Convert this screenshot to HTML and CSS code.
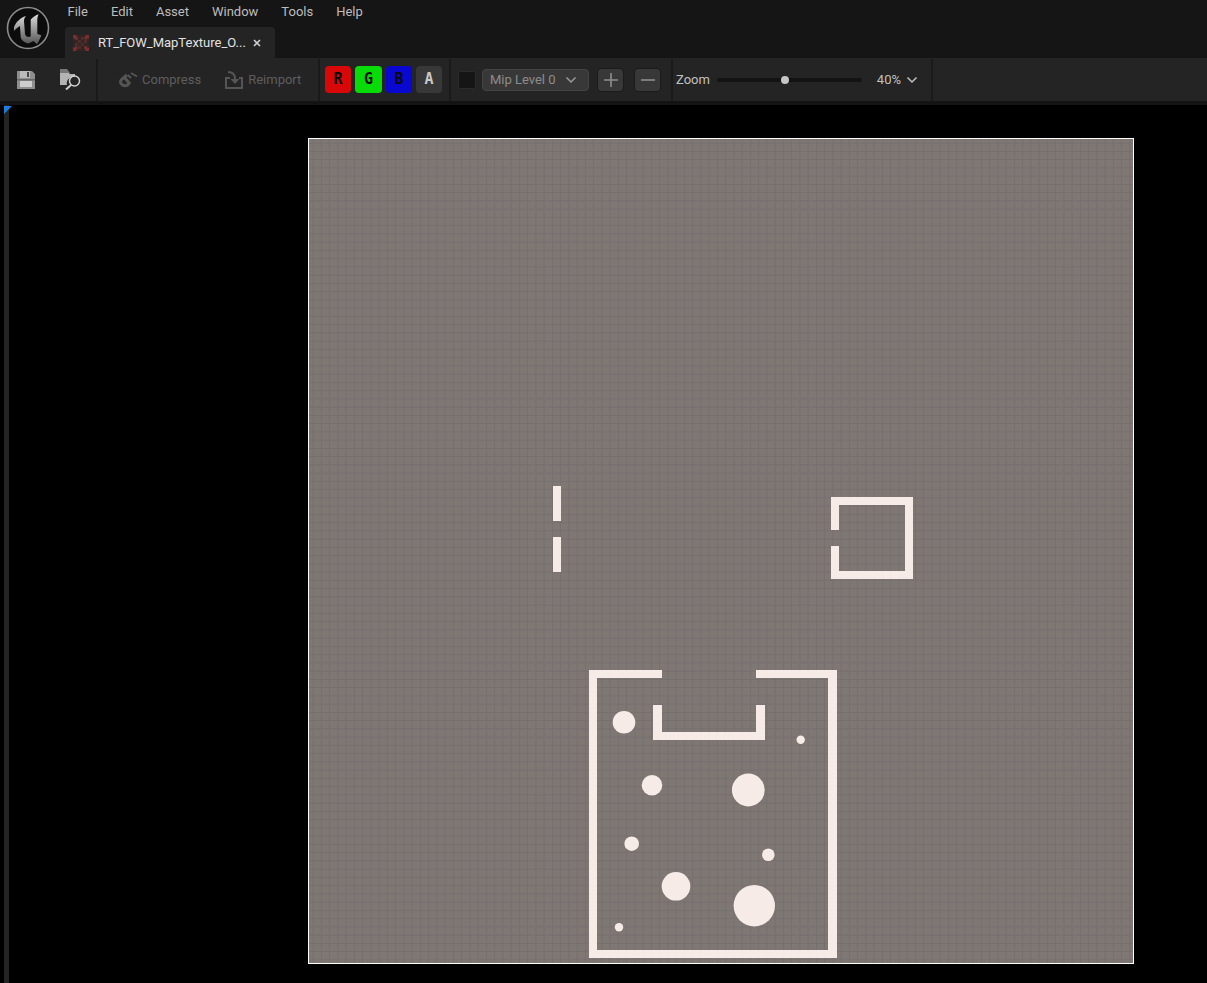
FILE: index.html
```html
<!DOCTYPE html>
<html lang="en">
<head>
  <meta charset="UTF-8" />
  <title>RT_FOW_MapTexture</title>
  <link rel="stylesheet" href="styles.css">
</head>
<body>
  <div class="title-area">
    <svg class="ue-logo" width="44" height="44" viewBox="0 0 44 44">
      <defs>
        <linearGradient id="ueGrad" x1="0" y1="0" x2="0" y2="1">
          <stop offset="0" stop-color="#dcdcdc" />
          <stop offset="0.6" stop-color="#8a8a8a" />
          <stop offset="1" stop-color="#555" />
        </linearGradient>
      </defs>
      <circle cx="22" cy="22" r="20.500" fill="#0c0c0c" stroke="#8c8c8c" stroke-width="1.600" />
      <path d="M8 21 C10 16 14 12 20 10 C18.500 12 18 13 18 15 L19 28 C19.500 30.500 22 31.500 24.700 30.500 L24.700 13.500 C27 11 30 9 32.700 8.300 C31.800 10 31.300 12 31.300 14 L31.300 28 L35.300 29.300 C34 33 32.500 36 31 38.300 L27.500 35 L22.500 37.500 C18 36.500 15 34 14.700 31 L14 20 C12 21 9.500 23 8 25 Z" fill="url(#ueGrad)" />
    </svg>
    <div class="title-right">
      <nav class="menu">
        <span>File</span><span>Edit</span><span>Asset</span><span>Window</span><span>Tools</span><span>Help</span>
      </nav>
      <div class="tab">
        <svg class="tab-icon" width="16" height="16" viewBox="0 0 16 16">
          <rect x="0" y="0" width="16" height="16" fill="#342424" />
          <path d="M2 2h3v3h-3zM8 2h3v3h-3zM5 5h3v3h-3zM11 5h3v3h-3zM2 8h3v3h-3zM8 8h3v3h-3zM5 11h3v3h-3zM11 11h3v3h-3z" fill="#4e2c2c" />
          <path d="M0 0h4l-1 1 2 2-2 2-2-2-1 1zM16 0v4l-1-1-2 2-2-2 2-2-1-1zM0 16v-4l1 1 2-2 2 2-2 2 1 1zM16 16h-4l1-1-2-2 2-2 2 2 1-1z" fill="#7a3030" />
        </svg>
        <span class="tab-title">RT_FOW_MapTexture_O...</span>
        <svg class="tab-close" width="8" height="8" viewBox="0 0 8 8">
          <path d="M1 1l6 6M7 1l-6 6" stroke="#cfcfcf" stroke-width="1.600" />
        </svg>
      </div>
    </div>
  </div>

  <div class="toolbar">
    <div class="tool-group group-save">
      <svg width="18" height="18" viewBox="0 0 18 18">
        <path d="M0 0h15l3 3v15h-18z" fill="#8e8e8e" />
        <rect x="3" y="0" width="10" height="7" fill="#bcbcbc" />
        <rect x="10" y="1" width="2" height="5" fill="#484848" />
        <rect x="0" y="8" width="18" height="1.500" fill="#666" />
        <rect x="3" y="10" width="12" height="6" fill="#cdcdcd" />
      </svg>
      <svg class="browse-icon" width="21" height="21" viewBox="0 0 21 21">
        <path d="M0 2h7l3 3h5v3a6.500 6.500 0 0 0-8 8h-7z" fill="#b4b4b4" />
        <path d="M0 0h7l3 4h-10z" fill="#777" />
        <circle cx="14.500" cy="12" r="5" fill="none" stroke="#cfcfcf" stroke-width="1.500" />
        <path d="M11 16l-5 4.500" stroke="#cfcfcf" stroke-width="2" />
      </svg>
    </div>
    <div class="tool-sep"></div>
    <div class="tool-group group-import">
      <div class="tool-btn">
        <svg width="20" height="20" viewBox="0 0 20 20" fill="none" stroke="#555" stroke-width="3">
          <path d="M9 5l-5 4c-2 2-2 4 0 5.500s4 1.500 5.500 .500l2-2" />
          <path d="M6 7l6 7" />
          <path d="M10 5l3 3M13 3l6 3.500" stroke-width="2" />
        </svg>
        <span>Compress</span>
      </div>
      <div class="tool-btn">
        <svg width="20" height="20" viewBox="0 0 20 20" fill="none" stroke="#555" stroke-width="2">
          <path d="M6 8h-4v10h16v-10h-3" />
          <path d="M4 2c5 0 7 2 7 7" />
          <path d="M6.500 9l4.500 5 4.500-5z" fill="#555" stroke="none" />
        </svg>
        <span>Reimport</span>
      </div>
    </div>
    <div class="tool-sep"></div>
    <div class="tool-group group-channels">
      <span class="channel channel-r">R</span>
      <span class="channel channel-g">G</span>
      <span class="channel channel-b">B</span>
      <span class="channel channel-a">A</span>
    </div>
    <div class="tool-sep"></div>
    <div class="tool-group group-mip">
      <span class="checkbox"></span>
      <div class="combo">
        <span>Mip Level 0</span>
        <svg width="12" height="8" viewBox="0 0 12 8"><path d="M1.500 1.500l4.500 4.500 4.500-4.500" fill="none" stroke="#9a9a9a" stroke-width="1.500" /></svg>
      </div>
      <span class="square-btn">
        <svg width="14" height="14" viewBox="0 0 14 14"><path d="M7 0v14M0 7h14" stroke="#8e8e8e" stroke-width="1.600" /></svg>
      </span>
      <span class="square-btn">
        <svg width="14" height="14" viewBox="0 0 14 14"><path d="M0 7h14" stroke="#8e8e8e" stroke-width="1.600" /></svg>
      </span>
    </div>
    <div class="tool-sep"></div>
    <div class="tool-group group-zoom">
      <span class="zoom-label">Zoom</span>
      <div class="slider"><span class="slider-thumb"></span></div>
      <span class="zoom-value">40%</span>
      <svg width="12" height="8" viewBox="0 0 12 8"><path d="M1.500 1.500l4.500 4.500 4.500-4.500" fill="none" stroke="#c0c0c0" stroke-width="1.500" /></svg>
    </div>
    <div class="tool-sep"></div>
  </div>
  <div class="toolbar-shadow"></div>

  <div class="viewport">
    <div class="side-strip"></div>
    <span class="corner-mark"></span>
    <svg class="texture" width="826" height="826" viewBox="308 138 826 826">
      <defs>
        <pattern id="gridFine" x="309" y="139" width="8.250" height="8.250" patternUnits="userSpaceOnUse">
          <rect width="8.250" height="8.250" fill="#7e7774" />
          <path d="M4.125 0V8.250M0 4.125H8.250" stroke="#756f6d" stroke-width="1" />
        </pattern>
      </defs>
      <rect x="308.500" y="138.500" width="825" height="825" fill="url(#gridFine)" stroke="#fff" />
      <g fill="#f6ebe7">
        <rect x="553" y="486" width="8" height="35" />
        <rect x="553" y="537" width="8" height="35" />

        <path d="M831 497h82v82h-82v-33h8v25h66v-66h-66v25h-8z" />

        <path d="M589 670h73v8h-65v272h231v-272h-72v-8h81v288h-248z" />
        <path d="M653 705h9v27h94v-27h9v35h-112z" />

        <circle cx="624" cy="722.300" r="11.300" />
        <circle cx="652" cy="785.300" r="10.300" />
        <circle cx="748.300" cy="790" r="16.400" />
        <circle cx="800.700" cy="739.700" r="4.200" />
        <circle cx="631.700" cy="843.700" r="7.300" />
        <circle cx="768.300" cy="854.700" r="6.300" />
        <circle cx="676" cy="886.300" r="14.300" />
        <circle cx="754.300" cy="905.700" r="20.700" />
        <circle cx="619" cy="927.300" r="4.200" />
      </g>
    </svg>
  </div>
</body>
</html>
```

FILE: styles.css
```css
html, body {
  margin: 0;
  height: 983px;
  overflow: hidden;
}
body {
  background: #000;
  font-family: "Roboto", "Liberation Sans", sans-serif;
  font-size: 13px;
  color: #c0c0c0;
}

/* title bar */
.title-area {
  display: flex;
  height: 58px;
  background: #151515;
  box-sizing: border-box;
}
.ue-logo {
  flex: none;
  margin: 6px 0 0 6px;
}
.title-right {
  display: flex;
  flex-direction: column;
  margin-left: 15px;
}
.menu {
  display: flex;
  gap: 23px;
  height: 27px;
  padding: 4px 0 0 2.500px;
  box-sizing: border-box;
  line-height: 15px;
  color: #bdbdbd;
}
.tab {
  display: flex;
  align-items: center;
  width: 210px;
  height: 31px;
  box-sizing: border-box;
  padding: 0 14px 0 8px;
  background: #242424;
  border-radius: 4px 4px 0 0;
}
.tab-icon {
  flex: none;
}
.tab-title {
  margin-left: 9px;
  flex: 1;
  color: #e2e2e2;
  white-space: nowrap;
}
.tab-close {
  flex: none;
}

/* toolbar */
.toolbar {
  display: flex;
  align-items: center;
  height: 43px;
  background: #242424;
}
.toolbar-shadow {
  height: 4px;
  background: #141414;
}
.tool-sep {
  flex: none;
  width: 2px;
  height: 42px;
  background: #1a1a1a;
}
.tool-group {
  display: flex;
  align-items: center;
  box-sizing: border-box;
}
.group-save {
  width: 96px;
  padding-left: 17px;
  gap: 25px;
}
.group-import {
  width: 220px;
  padding-left: 20px;
  gap: 23px;
  color: #5e5e5e;
}
.tool-btn {
  display: flex;
  align-items: center;
  gap: 4px;
}
.group-channels {
  width: 129px;
  padding-left: 5px;
  gap: 4px;
}
.channel {
  width: 26px;
  height: 27px;
  border-radius: 4px;
  text-align: center;
  font-family: "DejaVu Sans Mono", "Liberation Mono", monospace;
  font-weight: bold;
  font-size: 15px;
  line-height: 27px;
  color: #0a0a0a;
}
.channel-r { background: #d80808; }
.channel-g { background: #08dc08; width: 27px; }
.channel-b { background: #0808d0; }
.channel-a { background: #383838; color: #c8c8c8; }
.group-mip {
  width: 220px;
  padding-left: 7px;
}
.checkbox {
  width: 18px;
  height: 18px;
  border-radius: 2px;
  background: #151515;
  border: 1px solid #2a2a2a;
  box-sizing: border-box;
}
.combo {
  display: flex;
  align-items: center;
  justify-content: space-between;
  width: 108px;
  height: 22px;
  margin: 0 8px 0 6px;
  padding: 0 11px 0 7px;
  box-sizing: border-box;
  background: #383838;
  border: 1px solid #444;
  border-radius: 4px;
  color: #8c8c8c;
}
.square-btn {
  display: flex;
  align-items: center;
  justify-content: center;
  width: 27px;
  height: 24px;
  margin-right: 10px;
  box-sizing: border-box;
  background: #383838;
  border: 1px solid #1a1a1a;
  border-radius: 4px;
}
.group-zoom {
  width: 258px;
  padding-left: 3px;
}
.zoom-label {
  width: 41px;
}
.slider {
  position: relative;
  width: 145px;
  height: 4px;
  border-radius: 2px;
  background: #131313;
}
.slider-thumb {
  position: absolute;
  left: 64px;
  top: -2px;
  width: 8px;
  height: 8px;
  border-radius: 50%;
  background: #c6c6c6;
}
.zoom-value {
  width: 39px;
  text-align: right;
  margin-right: 5px;
}

/* texture viewport */
.viewport {
  position: relative;
  height: 878px;
  background: #000;
  padding: 33px 0 0 308px;
  box-sizing: border-box;
}
.side-strip {
  position: absolute;
  left: 4px;
  top: 0;
  bottom: 0;
  width: 5px;
  background: #242424;
}
.corner-mark {
  position: absolute;
  left: 4px;
  top: 1px;
  width: 0;
  height: 0;
  border-top: 8px solid #1a7de0;
  border-right: 8px solid transparent;
}
.texture {
  display: block;
}
```
